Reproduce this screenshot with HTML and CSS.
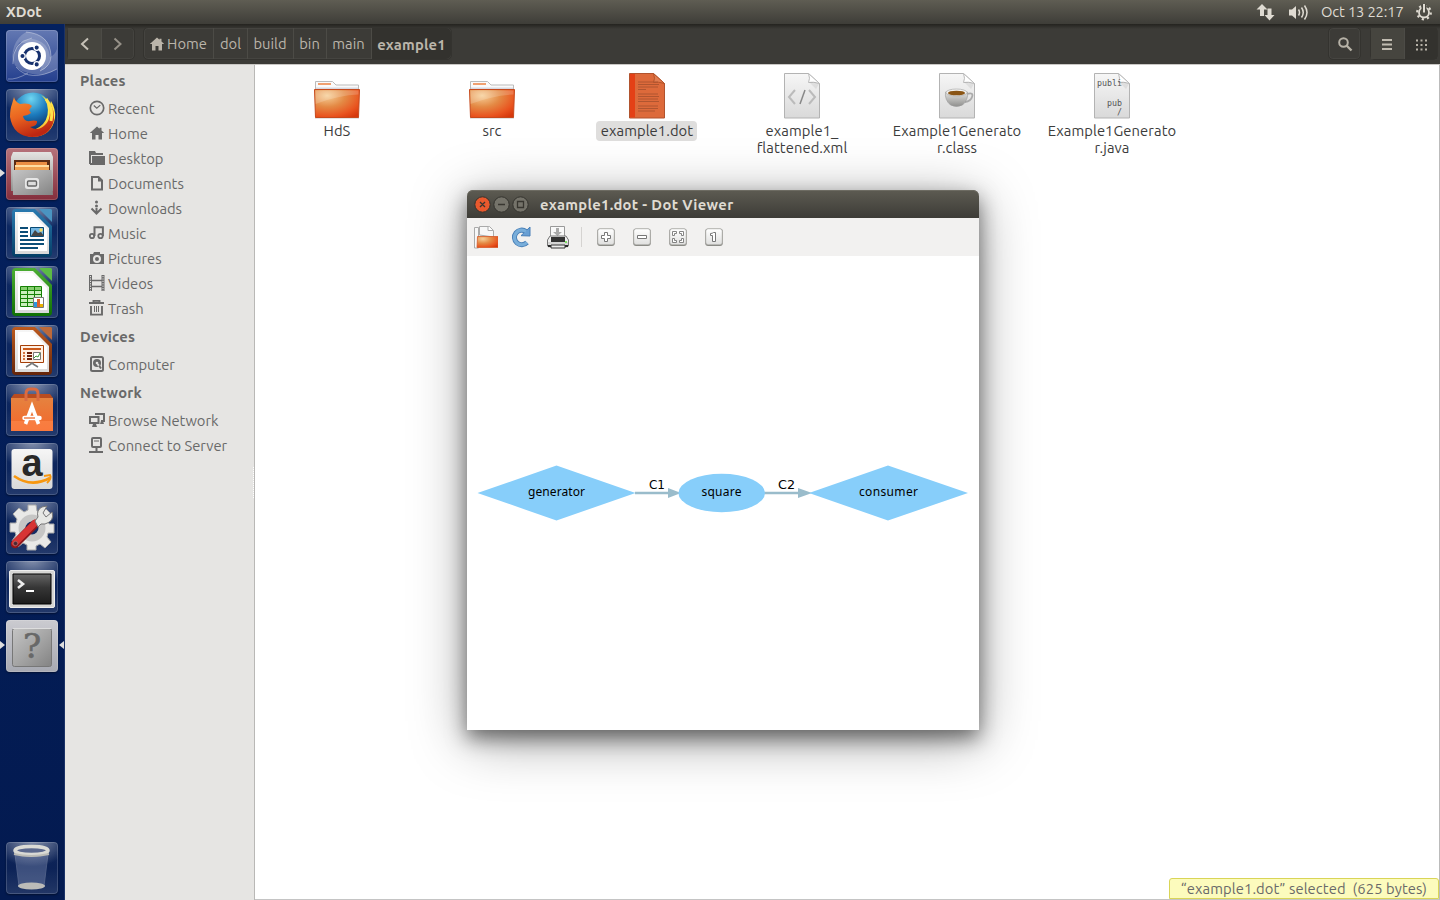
FILE: index.html
```html
<!DOCTYPE html>
<html lang="en">
<head>
<meta charset="utf-8">
<title>XDot</title>
<link rel="stylesheet" href="styles.css">
</head>
<body>
<svg class="defs" width="0" height="0" aria-hidden="true">
  <defs>
    <radialGradient id="folder" cx=".28" cy=".22" r=".95"><stop offset="0" stop-color="#f6cf98"/><stop offset=".42" stop-color="#e48a45"/><stop offset=".78" stop-color="#e9541f"/><stop offset="1" stop-color="#d6380c"/></radialGradient>
    <linearGradient id="paper" x2="0" y2="1"><stop offset="0" stop-color="#f6f6f6"/><stop offset="1" stop-color="#d9d9d9"/></linearGradient>
    <linearGradient id="metal" x2="0" y2="1"><stop offset="0" stop-color="#e4e4e2"/><stop offset="1" stop-color="#8f8f8d"/></linearGradient>
    <linearGradient id="metal2" x2="1" y2="1"><stop offset="0" stop-color="#c4c4c4"/><stop offset=".5" stop-color="#a6a6a6"/><stop offset="1" stop-color="#838383"/></linearGradient>
    <linearGradient id="orange" x2="0" y2="1"><stop offset="0" stop-color="#e5823f"/><stop offset="1" stop-color="#f4662a"/></linearGradient>
    <linearGradient id="writer" x2="0" y2="1"><stop offset="0" stop-color="#2a7ab0"/><stop offset="1" stop-color="#043e66"/></linearGradient>
    <linearGradient id="calc" x2="0" y2="1"><stop offset="0" stop-color="#4cae33"/><stop offset="1" stop-color="#0f7003"/></linearGradient>
    <linearGradient id="impress" x2="0" y2="1"><stop offset="0" stop-color="#bd5a1e"/><stop offset="1" stop-color="#65250a"/></linearGradient>
    <linearGradient id="screen" x2="0" y2="1"><stop offset="0" stop-color="#666"/><stop offset=".45" stop-color="#363636"/><stop offset="1" stop-color="#1c1c1c"/></linearGradient>
    <radialGradient id="globe" cx=".45" cy=".15" r=".8"><stop offset="0" stop-color="#6fd6f2"/><stop offset=".5" stop-color="#1c7bbd"/><stop offset="1" stop-color="#08285f"/></radialGradient>
    <linearGradient id="fox" x2=".4" y2="1"><stop offset="0" stop-color="#f59332"/><stop offset=".5" stop-color="#ea6420"/><stop offset="1" stop-color="#bc2612"/></linearGradient>
    <linearGradient id="flame" x2="0" y2="1"><stop offset="0" stop-color="#ffd83e"/><stop offset=".5" stop-color="#fff04a"/><stop offset="1" stop-color="#f08a1c"/></linearGradient>
    <linearGradient id="button" x2="0" y2="1"><stop offset="0" stop-color="#fff"/><stop offset="1" stop-color="#e0e0df"/></linearGradient>
    <symbol id="bigfolder" viewBox="0 0 48 48"><path d="M2.500 18V9.500h17l3.500 3.500h22.500V19z" fill="#fafafa" stroke="#bbb"/><path d="M5 11h13v2H5z" fill="#f0a070"/><path d="M3 16.500h42" stroke="#d8d8e0" stroke-width="2"/><path d="M2 45.900h44" stroke="#777" opacity=".5"/><path d="M1.500 17.500h45L45.500 45.500h-43z" fill="url(#folder)" stroke="#c6491c"/><path d="M2.500 18.500h43v4Q26 23 2.500 32z" fill="#fff" opacity=".18"/></symbol>
    <symbol id="sheet" viewBox="0 0 48 48"><path d="M6.500 1.500h24l11 10v34.500h-35z" fill="url(#paper)" stroke="#b3b3b3"/><path d="M30.500 1.500q2 5 0 9 5-1 11 1z" fill="#fff" stroke="#bbb"/><path d="M31 10q5-1 10 2l-3 5z" fill="#777" opacity=".13"/></symbol>
    <symbol id="home" viewBox="0 0 16 16"><path d="M8 1.500.8 8H3v6.500h3.500V10h3v4.500H13V8h2.200L12.500 5.500V2.800h-2v1z"/></symbol>
    <symbol id="toolbutton" viewBox="0 0 24 24"><rect x="3.200" y="3.500" width="17.600" height="17.500" rx="3" fill="#888883"/><rect x="3.800" y="3.800" width="16.400" height="15.900" rx="2.500" fill="url(#button)" stroke="#a8a8a5" stroke-width=".6"/></symbol>
  </defs>
</svg>

<header class="panel">
  <span class="panel-title">XDot</span>
  <div class="indicators">
    <svg width="20" height="24"><path d="M6 4 .5 9.500H4V16h4V9.500h3.500zM11.500 8.500h4V15h3L13.500 20.500 8.500 15h3z" fill="#dfdbd2"/></svg>
    <svg class="volume" width="22" height="24"><path d="M1 9.500h3L8 6v13l-4-3.500H1z" fill="#dfdbd2"/><path d="M10.500 9.500q2 3 0 6M13.500 7.500q3.500 5 0 10M16.500 5.500q5 7 0 14" fill="none" stroke="#dfdbd2" stroke-width="1.500"/></svg>
    <span class="clock">Oct 13 22:17</span>
    <svg class="power" width="18" height="24" viewBox="0 0 18 24"><circle cx="9" cy="12.500" r="5" fill="none" stroke="#dfdbd2" stroke-width="1.800"/><circle cx="9" cy="12.500" r="6.800" fill="none" stroke="#dfdbd2" stroke-width="2.200" stroke-dasharray="2.200 3.140"/><path d="M9 4v7" stroke="#4c4a43" stroke-width="5"/><path d="M9 4v8.500" stroke="#dfdbd2" stroke-width="2"/></svg>
  </div>
</header>

<div class="desktop">
  <nav class="launcher">
    <div class="tile dash"><svg viewBox="0 0 52 52"><g fill="#fff"><path d="M20 2Q44 4 45 25 44 38 34 41 44 20 14 12 5 20 7 38 3 12 20 2z" opacity=".2"/><path d="M7 30Q8 10 26 9q16 2 18 18 5-2 7-8v20Q38 48 22 43 9 40 7 30z" opacity=".2"/></g><path d="M2 49Q10 50 22 43M7 34Q6 12 26 8M20 2q24 2 25 24 0 10-11 15M10 37q14 16 41 2" fill="none" stroke="#fff" opacity=".35"/><circle cx="26" cy="26" r="14" fill="#fff"/><circle cx="26" cy="26" r="7.500" fill="none" stroke="#17316d" stroke-width="3"/><g fill="#17316d" stroke="#fff" stroke-width="1.300"><circle cx="16.500" cy="26" r="2.700"/><circle cx="30.700" cy="17.600" r="2.700"/><circle cx="30.700" cy="34.400" r="2.700"/></g></svg></div>
    <div class="tile"><svg viewBox="0 0 52 52"><circle cx="27" cy="24" r="20.500" fill="url(#globe)"/><path d="M35 6q6 3 9 10l1-4q5 8 4 17Q46 47 27 48q-9 0-15-8 15 5 25-5 7-8 4-20-2-6-6-9z" fill="url(#flame)"/><path d="M6 15 8 8q1 5 6 7 5-1 9 0l3 2-3 4 2 3q-4 3-8 3 1 6 7 5 4-1 7 0 1 5-7 6 8 5 15-2Q46 30 43 13q6 8 5 18-4 17-22 17Q7 47 4 28q0-8 2-13z" fill="url(#fox)"/><path d="M40 10q8 10 5 22" fill="none" stroke="#ffe14a" stroke-width="3"/></svg></div>
    <div class="tile red"><i class="running"></i><svg viewBox="0 0 52 52"><path d="M7 4h38l2 5v34H5V9z" fill="url(#metal)"/><path d="M8 12h36v12H8z" fill="#5b2c14"/><path d="M10 14h31v9H10z" fill="#eb8e43"/><path d="M9 17h34v6H9z" fill="#ffdca0"/><path d="M9 19h34v4H9z" fill="#efa253"/><path d="M6.500 22h39l1.500 25H7z" fill="url(#metal2)"/><rect x="19" y="30" width="14" height="11" rx="2.500" fill="#e6e6e6"/><rect x="21.500" y="33" width="9" height="5" rx="1" fill="#ddd" stroke="#666" stroke-width="1.400"/></svg></div>
    <div class="tile"><svg viewBox="0 0 52 52"><path d="M6 6q0-4 4-4h19l17 17v27q0 4-4 4H10q-4 0-4-4z" fill="url(#writer)"/><path d="M33 2h12l1 1v12z" fill="#4a94c1"/><path d="M9 5h18l16 16v26H9z" fill="url(#paper)"/><path d="M12 7h14l15 15v22H12z" fill="#fff"/><path d="M14 21h8M14 25h8M14 29h8M14 33h24M14 37h24M14 41h18" stroke="#0b4d77" stroke-width="1.800"/><path d="M24.500 20.500h13v9h-13z" fill="#73b6e2" stroke="#084a75"/><circle cx="35" cy="23" r="1.700" fill="#f7d95d"/><path d="m25 29 4-6 3 3 3-1 3 4z" fill="#454545"/></svg></div>
    <div class="tile"><svg viewBox="0 0 52 52"><path d="M6 6q0-4 4-4h19l17 17v27q0 4-4 4H10q-4 0-4-4z" fill="url(#calc)"/><path d="M33 2h12l1 1v12z" fill="#5cbb45"/><path d="M9 5h18l16 16v26H9z" fill="url(#paper)"/><path d="M12 7h14l15 15v22H12z" fill="#fff"/><path d="M14.500 20.500h21v20h-21z" fill="#cbefbc" stroke="#168105"/><path d="M15 21h20v3H15z" fill="#88cf70"/><path d="M14.500 24.500h21m-21 4h21m-21 4h21m-21 4h21m-14-16v20m7-20v20" stroke="#168105"/><path d="M27.500 31.500h10v10h-10z" fill="#fff" stroke="#777"/><path d="M28 36h3v5h-3z" fill="#2f96df"/><path d="M31 33h3v8h-3z" fill="#df612a"/><path d="M34 38h3v3h-3z" fill="#e8b000"/></svg></div>
    <div class="tile"><svg viewBox="0 0 52 52"><path d="M6 6q0-4 4-4h19l17 17v27q0 4-4 4H10q-4 0-4-4z" fill="url(#impress)"/><path d="M33 2h12l1 1v12z" fill="#bd6a3a"/><path d="M9 5h18l16 16v26H9z" fill="url(#paper)"/><path d="M12 7h14l15 15v22H12z" fill="#fff"/><path d="M14.500 20.500h23v17h-23z" fill="#fff0e4" stroke="#a53f08"/><path d="M17 24h18" stroke="#cb5a1b" stroke-width="2"/><path d="M17 28h2m-2 3h2m-2 3h2" stroke="#d37340" stroke-width="2"/><path d="M21 28h5m-5 3h5m-5 3h5" stroke="#6d210a" stroke-width="2"/><path d="M27.500 27.500h7v7h-7z" fill="#fff" stroke="#777"/><path d="m28 33 2-2 2 1 2-4" fill="none" stroke="#389833"/><path d="m20 42 5-3v-1h2v1l5 3" fill="none" stroke="#777" stroke-width="1.500"/></svg></div>
    <div class="tile"><svg viewBox="0 0 52 52"><path d="M5 14 8 10h36l3 4z" fill="#b84c20"/><path d="M5 14h42v33H5z" fill="url(#orange)"/><path d="M5 37h42v10H5z" fill="#ff8d52" opacity=".5"/><path d="M20 17v-7q0-5 4-5h4q4 0 4 5v7" fill="none" stroke="#da6b41" stroke-width="3"/><path d="M19.500 40 26 22.500 32.500 40" fill="none" stroke="#fff" stroke-width="3.600"/><path d="M18.500 34h15" stroke="#fff" stroke-width="4.500" stroke-linecap="round"/><path d="M18 34h11" stroke="#ee6d30" stroke-width="1.300"/></svg></div>
    <div class="tile"><svg viewBox="0 0 52 52"><rect x="5.500" y="6" width="41" height="40" rx="3" fill="url(#paper)"/><text class="amazon" x="26" y="33">a</text><path d="M8 33q17 12 36 2" fill="none" stroke="#f79710" stroke-width="2.700"/><path d="m38 33 6-1q2 3-3 8" fill="none" stroke="#f79710" stroke-width="2"/></svg></div>
    <div class="tile"><svg viewBox="0 0 52 52"><path d="M22 3h8l1 6 4 2 5-4 6 6-4 5 1 4h5v9h-6l-1 4 4 5-6 6-5-4-4 2v4h-9v-5l-4-2-5 4-6-6 4-6-1-3H4v-9h6l1-4-4-5 6-6 5 4 4-2z" fill="#e9e9e7" stroke="#aaa"/><circle cx="26" cy="26" r="10" fill="#132d65" stroke="#c6c6c5" stroke-width="7"/><path d="M9 42 29 22" stroke="#8d171b" stroke-width="8.500" stroke-linecap="round"/><path d="M9 41 29 21" stroke="#d73434" stroke-width="6.500" stroke-linecap="round"/><circle cx="9.500" cy="41.500" r="2.200" fill="#4b2632" stroke="#b88" stroke-width=".5"/><path d="m29 19 3-4q-2-7 4-10l5-1-4 7 3 4 6-5q3 9-7 12h-4l-3 3z" fill="#e7e8e5" stroke="#777"/></svg></div>
    <div class="tile"><svg viewBox="0 0 52 52"><rect x="3.500" y="9.500" width="45" height="37" rx="1.500" fill="#d6d6d4" stroke="#eee"/><path d="M7 13h38v30H7z" fill="url(#screen)" stroke="#000"/><path d="m12 19 5 4-5 4" fill="none" stroke="#eee" stroke-width="2.600"/><path d="M20 30h8" stroke="#fff" stroke-width="2"/></svg></div>
    <div class="tile active"><i class="running"></i><i class="focused"></i><svg viewBox="0 0 52 52"><rect x="6.500" y="8.500" width="39" height="38" rx="2" fill="url(#metal2)" stroke="#777"/><path d="M7 8.500h38" stroke="#ddd"/><text class="unknown" x="26" y="38">?</text></svg></div>
    <div class="tile trash"><svg viewBox="0 0 52 52"><path d="M9 12h33l-4 32q-12 5-25 0z" fill="#a9b4d4" opacity=".3" stroke="#d5daeb"/><ellipse cx="25.500" cy="44" rx="13.500" ry="3.500" fill="#bcbcb8"/><ellipse cx="25.500" cy="8.500" rx="16.500" ry="4" fill="#5b688d" stroke="#dadad5" stroke-width="3.500"/><path d="M8 12q17 4 35 0" fill="none" stroke="#bdbdb7" stroke-width="2"/></svg></div>
  </nav>

  <main class="files">
    <div class="toolbar">
      <div class="group arrows">
        <span class="lit"><svg width="16" height="16"><path d="M11 2.500 5 8l6 5.500" fill="none" stroke="#c6c1b7" stroke-width="2"/></svg></span>
        <span><svg width="16" height="16"><path d="m4.500 2.500 6 5.500-6 5.500" fill="none" stroke="#969188" stroke-width="2"/></svg></span>
      </div>
      <div class="group path">
        <span class="p-home"><svg width="16" height="16" fill="#bbb5aa"><use href="#home"/></svg>Home</span><span class="p-dol">dol</span><span class="p-build">build</span><span class="p-bin">bin</span><span class="p-main">main</span><b>example1</b>
      </div>
      <div class="group find"><span><svg width="16" height="16"><circle cx="6.500" cy="6.500" r="4.300" fill="none" stroke="#b7b2a7" stroke-width="2"/><path d="m9.500 9.500 5 5" stroke="#b7b2a7" stroke-width="2.400"/></svg></span></div>
      <div class="group views">
        <span class="lit"><svg width="16" height="16"><path d="M2 4h10M2 8.500h10M2 13h10" stroke="#c0bbb0" stroke-width="1.800"/></svg></span>
        <span class="pressed"><svg width="16" height="16"><path d="M3 4.500h11M3 9h11M3 13.500h11" stroke="#b7b2a7" stroke-width="2" stroke-dasharray="2 2.500"/></svg></span>
      </div>
    </div>

    <div class="content">
      <aside class="places">
        <h2>Places</h2>
        <p><svg width="16" height="16"><circle cx="8" cy="8" r="6.700" fill="none" stroke="#696969" stroke-width="1.700"/><path d="m4.800 5.500 3 2.800 3.500-3.200" fill="none" stroke="#696969" stroke-width="1.200"/></svg>Recent</p>
        <p><svg width="16" height="16"><use href="#home"/></svg>Home</p>
        <p><svg width="16" height="16"><path d="M0 1h6l1 2h7v2H2v9H0zM3 6h13v9H1V13h2z"/></svg>Desktop</p>
        <p><svg width="16" height="16"><path d="M3 1.900h6.500L13 5.500v9H3z" fill="none" stroke="#696969" stroke-width="2"/><path d="M9 2v4.500h4z"/></svg>Documents</p>
        <p><svg width="16" height="16"><circle cx="7.500" cy="2" r="1.500"/><circle cx="7.500" cy="6" r="1.500"/><path d="M7.500 8v5M2.500 8.500l5 5 5-5" fill="none" stroke="#696969" stroke-width="2"/></svg>Downloads</p>
        <p><svg width="16" height="16"><circle cx="3" cy="11" r="2.200" fill="none" stroke="#696969" stroke-width="1.800"/><circle cx="11.500" cy="11" r="2.200" fill="none" stroke="#696969" stroke-width="1.800"/><path d="M5.500 11V2.200h8.400V11" fill="none" stroke="#696969" stroke-width="2"/></svg>Music</p>
        <p><svg width="16" height="16"><path fill-rule="evenodd" d="M1 4h3l1-2h6v2h4v10H1zm7 1a4 4 0 1 0 0 8 4 4 0 0 0 0-8m0 2a2 2 0 1 1 0 4 2 2 0 0 1 0-4"/></svg>Pictures</p>
        <p><svg width="16" height="16"><path d="M1.500 0v16M14 0v16" stroke="#696969" stroke-width="3"/><path d="M1.500 1v15M14 1v15" stroke="#e7e5e3" stroke-width="1" stroke-dasharray="1.200 1.200"/><path d="M3 5.500h10M3 11.500h10" stroke="#696969" stroke-width="1.400"/></svg>Videos</p>
        <p><svg width="16" height="16"><path d="M4.500 2V.9h6V2M0 3h15M2 6v8.600h11V6" fill="none" stroke="#696969" stroke-width="1.900"/><path d="M5.500 6v6M7.500 6v6M9.500 6v6" stroke="#696969"/></svg>Trash</p>
        <h2>Devices</h2>
        <p><svg width="16" height="16"><rect x="2" y="1" width="12" height="14" rx="1.500" fill="none" stroke="#696969" stroke-width="2"/><circle cx="8" cy="7" r="4"/><circle cx="8" cy="7" r="1.300" fill="#e7e5e3"/><path d="m8.500 8 4 5" stroke="#e7e5e3" stroke-width="2"/><path d="m10 9.500 2 3" stroke="#696969" stroke-width="2"/></svg>Computer</p>
        <h2>Network</h2>
        <p><svg width="16" height="16"><path d="M1 5h8.500v6H1zM7 3V2h8v7h-3" fill="none" stroke="#696969" stroke-width="2"/><path d="M4 12h3l1 3H3zM12 9h2l1 3h-4z"/></svg>Browse Network</p>
        <p><svg width="16" height="16"><rect x="3" y="1" width="9" height="9" rx="1" fill="none" stroke="#696969" stroke-width="2"/><path d="M5 4h5" stroke="#696969"/><path d="M7.500 10v5M0 15h14" stroke="#696969" stroke-width="2"/></svg>Connect to Server</p>
        <i class="grip"></i>
      </aside>

      <section class="icons">
        <figure><svg><use href="#bigfolder"/></svg><figcaption>HdS</figcaption></figure>
        <figure><svg><use href="#bigfolder"/></svg><figcaption>src</figcaption></figure>
        <figure class="selected"><svg viewBox="0 0 48 48"><path d="M6.500 1.500h24l11 10v34.500h-35z" fill="#dd6a3b" stroke="#b1532e"/><path d="M7 2h5v43.500H7z" fill="#e44016"/><path d="M30.500 1.500q2 5 0 9 5-1 11 1z" fill="#e17c50" stroke="#b55329"/><path d="M15 10h20M15 12.500h21M15 15h20M15 17.500h8M15 22h20M15 24.500h21M15 27h20M15 29.500h21M15 34h20M15 36.500h20M15 39h17" stroke="#b05530"/></svg><figcaption>example1.dot</figcaption></figure>
        <figure><svg viewBox="0 0 48 48"><use href="#sheet"/><path d="m17 18-6 7 6 7M31 18l6 7-6 7" fill="none" stroke="#bbb" stroke-width="2"/><path d="m27 18-5 14" stroke="#888" stroke-width="1.500"/></svg><figcaption>example1_<br>flattened.xml</figcaption></figure>
        <figure><svg viewBox="0 0 48 48"><use href="#sheet"/><path d="M34 22q7-2 5 3-1 4-7 5" fill="none" stroke="#aaa" stroke-width="1.800"/><path d="M12.500 20h22q1 8-5 13-6 3-12 0-6-5-5-13z" fill="url(#metal)" stroke="#999" stroke-width=".6"/><ellipse cx="23.500" cy="20.500" rx="10.500" ry="3.500" fill="#f3f3f1" stroke="#aaa" stroke-width=".7"/><ellipse cx="23.500" cy="21" rx="8.500" ry="2.300" fill="#8a5515"/></svg><figcaption>Example1Generato<br>r.class</figcaption></figure>
        <figure><svg viewBox="0 0 48 48"><use href="#sheet"/><g class="code"><text x="9" y="14">publi</text><text x="19" y="34">pub</text><text x="29" y="43">/</text></g></svg><figcaption>Example1Generato<br>r.java</figcaption></figure>
      </section>
    </div>
  </main>
</div>

<div class="status">“example1.dot” selected&nbsp; (625 bytes)</div>

<section class="window">
  <div class="titlebar">
    <svg width="60" height="28"><g stroke="#34332e"><circle cx="8.500" cy="14.500" r="7.700" fill="#e9592d"/><circle cx="27.500" cy="14.500" r="7.700" fill="#75736a"/><circle cx="46.500" cy="14.500" r="7.700" fill="#75736a"/></g><path d="m6 12 5 5m0-5-5 5M24 14.500h7M43.500 11.500h6v6h-6z" fill="none" stroke="#383630" stroke-width="1.300"/></svg>
    <span>example1.dot - Dot Viewer</span>
  </div>
  <div class="window-tools">
    <svg viewBox="0 0 24 24"><path d="M.5 23V2.500h4V23zM5.500 10V1.500h10l4 4V12z" fill="#f7f7f7" stroke="#aaa"/><path d="M14 1.500v4h5" fill="#fff" stroke="#aaa"/><path d="M3.500 11.500h20.500V22.500H3z" fill="url(#folder)" stroke="#d65a2a" stroke-width=".8"/></svg>
    <svg viewBox="0 0 24 24"><g transform="translate(-1 0)"><path d="M18 17.500A7.300 7.300 0 1 1 17 6.500" fill="none" stroke="#4a80b8" stroke-width="5"/><path d="M12 10.700 21 2v9z" fill="#689fd4" stroke="#4a80b8"/><path d="M18 17.500A7.300 7.300 0 1 1 17 6.500" fill="none" stroke="#79aeda" stroke-width="3.200"/></g></svg>
    <svg viewBox="0 0 24 24"><path d="M4.500 12V1.500h14V12" fill="#f9f9f9" stroke="#999"/><path d="M10 3h3v4h3l-4.500 4L7 7h3z" fill="#aaa"/><path d="M4 11h16l2.500 4v6H1.500v-6z" fill="#eee" stroke="#777"/><path d="M5 12h14v5H5z" fill="#333"/><path d="M2 18h20" stroke="#bbb"/><circle cx="20" cy="17" r="1" fill="#62e33e"/><path d="M2 21h20" stroke="#292929" stroke-width="2.200"/><path d="M5 20h14v3H5z" fill="#eee" stroke="#333"/></svg>
    <i class="divider"></i>
    <svg viewBox="0 0 24 24"><use href="#toolbutton"/><path d="M10.500 7.500h3v3h3v3h-3v3h-3v-3h-3v-3h3z" fill="#fff" stroke="#777"/></svg>
    <svg viewBox="0 0 24 24"><use href="#toolbutton"/><path d="M7.500 10.500h9v3h-9z" fill="#fff" stroke="#777"/></svg>
    <svg viewBox="0 0 24 24"><use href="#toolbutton"/><path d="M6.500 6.500h4v2h-2v2h-2zM13.500 6.500h4v4h-2v-2h-2zM6.500 13.500h2v2h2v2h-4zM17.500 13.500v4h-4v-2h2v-2z" fill="#fff" stroke="#777" stroke-width=".9"/></svg>
    <svg viewBox="0 0 24 24"><use href="#toolbutton"/><path d="M11.500 7.500h2v9h-3v-6h-2v-2q2 0 3-1z" fill="#fff" stroke="#777"/></svg>
  </div>
  <svg class="graph" width="512" height="474" viewBox="0 0 512 474">
    <path d="M168 237h34M297 237h37" stroke="#9abccb" stroke-width="2.300"/>
    <path d="M201 232v10l13-5zM331 232v10l14-5z" fill="#9abccb"/>
    <path d="m10.500 237 79-27.500 79 27.500-79 27.500zM342 237l79-27.500 80 27.500-80 27.500z" fill="#87cefa"/>
    <ellipse cx="254.700" cy="237" rx="43.300" ry="19.200" fill="#87cefa"/>
    <g class="node-text"><text x="61" y="240" textLength="57">generator</text><text x="234.500" y="240" textLength="40">square</text><text x="392" y="240" textLength="59">consumer</text><text class="edge" x="182" y="233" textLength="16" lengthAdjust="spacingAndGlyphs">C1</text><text class="edge" x="311" y="233" textLength="17" lengthAdjust="spacingAndGlyphs">C2</text></g>
  </svg>
</section>
</body>
</html>
```

FILE: styles.css
```css
* { box-sizing: border-box; }
body {
  margin: 0;
  width: 1440px;
  height: 900px;
  overflow: hidden;
  display: flex;
  flex-direction: column;
  font: 14.75px/17px Ubuntu, "Noto Sans", sans-serif;
  color: #3c3c3c;
}
.defs { position: absolute; }
svg { flex: none; }

/* Top panel */
.panel {
  height: 24px;
  flex: none;
  display: flex;
  align-items: center;
  justify-content: space-between;
  padding: 0 7px 0 6px;
  background: linear-gradient(#5f5d53, #3e3d38);
  color: #dfdbd2;
}
.panel-title { font-weight: 700; padding-bottom: 2px; }
.indicators { display: flex; align-items: center; }
.volume { margin-left: 12px; }
.clock { margin-left: 11px; padding-bottom: 2px; width: 82px; white-space: nowrap; letter-spacing: -.15px; }
.power { margin-left: 12px; }

.desktop { display: flex; flex: 1; min-height: 0; }

/* Launcher */
.launcher {
  width: 65px;
  flex: none;
  display: flex;
  flex-direction: column;
  gap: 7px;
  padding: 6px 0 6px 6px;
  background: linear-gradient(#04215f, #031a50);
  border-right: 1px solid #1b3267;
}
.tile {
  position: relative;
  width: 52px;
  height: 52px;
  border-radius: 4px;
  background: radial-gradient(ellipse 75% 50% at 50% -3%, rgba(255,255,255,.5), rgba(255,255,255,0)), linear-gradient(rgba(255,255,255,.05), rgba(255,255,255,.04) 50%, rgba(255,255,255,.13));
  box-shadow: inset 0 0 0 1px rgba(255,255,255,.16), 0 1px 2px rgba(0,0,0,.4);
}
.tile svg { display: block; width: 52px; height: 52px; }
.tile.dash { background: linear-gradient(#6378b2, #243f8e); }
.tile.red { background: linear-gradient(#b6737b, #842e3c); }
.tile.active { background: linear-gradient(#cbcbd0, #a7a9b2); }
.tile.trash { margin-top: auto; }
.running, .focused {
  position: absolute;
  top: 21px;
  border: 4px solid transparent;
}
.running { left: -6px; border-left: 5px solid #dedede; border-right: 0; }
.focused { right: -6px; border-right: 5px solid #dedede; border-left: 0; }
.amazon { font: 700 38px "Liberation Sans", sans-serif; text-anchor: middle; fill: #282828; }
.unknown { font: 34px "DejaVu Serif", serif; text-anchor: middle; fill: #686868; stroke: #686868; stroke-width: .6; }

/* File manager */
.files { flex: 1; display: flex; flex-direction: column; min-width: 0; }
.toolbar {
  height: 41px;
  flex: none;
  display: flex;
  align-items: center;
  padding: 0 2px 1px;
  background: linear-gradient(#24231f, #3c3b37 5px);
  border-bottom: 1px solid #c9c7c4;
  color: #bbb5aa;
}
.group {
  display: flex;
  height: 33px;
  border: 1px solid #34332f;
  border-radius: 5px;
  box-shadow: inset 0 0 0 1px #454440;
}
.group > * { display: flex; align-items: center; justify-content: center; }
.group > * + * { border-left: 1px solid #4c4b46; }
.arrows > *, .views > * { width: 33px; }
.lit { background: #46453f; }
.pressed { background: #33322e; }
.path { margin-left: 8px; }
.path > * { padding-bottom: 1px; }
.path .p-home { width: 69px; gap: 2px; padding-right: 1px; }
.path .p-home svg { margin-top: 2px; }
.path .p-dol { width: 34px; }
.path .p-build { width: 46px; padding-right: 1px; }
.path .p-bin { width: 33px; padding-right: 1px; }
.path .p-main { width: 45px; padding-right: 1px; }
.path b { width: 80px; padding: 2px 0 0; background: #33322e; border-radius: 0 5px 5px 0; letter-spacing: .2px; }
.find { margin-left: auto; width: 33px; }
.find span { width: 31px; }
.views { margin-left: 9px; width: 68px; }

.content { flex: 1; display: flex; min-height: 0; }
.places {
  position: relative;
  width: 190px;
  flex: none;
  padding-left: 15px;
  background: #e6e5e3;
  border-right: 1px solid #b9b8b6;
  color: #696969;
  fill: #696969;
}
.places h2 {
  margin: 0;
  height: 31px;
  padding-top: 1px;
  font-size: 14.75px;
  line-height: 30px;
  letter-spacing: .2px;
}
.places p {
  margin: 0;
  height: 25px;
  display: flex;
  align-items: center;
  gap: 3px;
  padding: 0 0 1px 9px;
  white-space: nowrap;
}
.places p svg { margin-bottom: 1px; }
.grip {
  position: absolute;
  right: 0;
  top: 402px;
  height: 31px;
  border-right: 1px dotted #fff;
}
.icons {
  flex: 1;
  display: flex;
  align-items: flex-start;
  padding: 6px 0 0 4px;
  background: #fff;
  border-right: 1px solid #bbb;
  border-bottom: 1px solid #c4c4c4;
}
figure {
  margin: 0;
  width: 155px;
  display: flex;
  flex-direction: column;
  align-items: center;
  text-align: center;
}
figure > svg { width: 48px; height: 48px; margin-top: 1px; }
figcaption { padding: 1px 4px 2px 5px; margin-top: 1px; letter-spacing: .08px; }
.selected figcaption {
  border-radius: 4px;
  background: #dfdedd;
}
.code { font: 8.3px "DejaVu Sans Mono", monospace; fill: #555; }

/* Status bubble sits over the icon view */
.status {
  position: absolute;
  right: 1px;
  bottom: 1px;
  width: 270px;
  height: 21px;
  border: 1px solid #d9d557;
  border-radius: 3px 3px 0 0;
  background: #fcfbbd;
  color: #696969;
  text-align: center;
  line-height: 20px;
  letter-spacing: .1px;
  white-space: nowrap;
}

/* Dot Viewer window */
.window {
  position: absolute;
  left: 467px;
  top: 190px;
  width: 512px;
  height: 540px;
  display: flex;
  flex-direction: column;
  border-radius: 6px 6px 0 0;
  background: #fff;
  box-shadow: 0 8px 20px rgba(0,0,0,.5), 0 10px 56px rgba(0,0,0,.36);
}
.titlebar {
  height: 28px;
  display: flex;
  align-items: center;
  padding-left: 7px;
  border-radius: 6px 6px 0 0;
  background: linear-gradient(#5d5b52, #3d3c37);
  box-shadow: inset 0 1px #6d6b62;
  color: #dfdbd2;
  font-weight: 700;
}
.titlebar span { margin-left: 6px; padding-top: 1px; white-space: nowrap; letter-spacing: .34px; }
.window-tools {
  height: 38px;
  display: flex;
  align-items: center;
  gap: 12px;
  padding-left: 7px;
  background: #f2f1f0;
}
.window-tools svg { width: 24px; height: 24px; }
.divider { width: 1px; height: 20px; margin: 0 0 0 -1px; background: #d5d3d1; }
.graph { display: block; }
.node-text { font: 12px "Noto Sans", sans-serif; fill: #000; }
.edge { font-family: "DejaVu Sans", sans-serif; }
```
